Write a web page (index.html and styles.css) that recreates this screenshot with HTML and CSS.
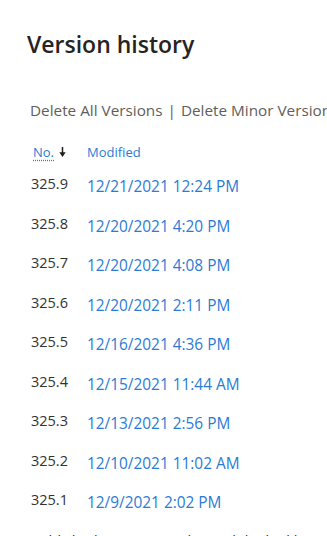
FILE: index.html
```html
<!DOCTYPE html>
<html lang="en">
<head>
  <meta charset="UTF-8" />
  <meta name="viewport" content="width=device-width, initial-scale=1.0"/>
  <title>Version history</title>
  <link rel="stylesheet" href="styles.css">
</head>
<body>
  <main class="panel">
    <h1>Version history</h1>

    <div class="actions">
      <a href="#">Delete All Versions</a>
      <span class="sep">|</span>
      <a href="#">Delete Minor Versions</a>
    </div>

    <div class="versions">
      <div class="head">
        <span class="col-no">
          <a href="#" class="sort">No.</a>
          <svg class="arrow" width="7" height="10" viewBox="0 0 7 10">
            <path d="M3.5 0 V6" stroke="#201f1e" stroke-width="1.5"/>
            <path d="M0.3 5.2 L6.7 5.2 L3.5 10 Z" fill="#201f1e"/>
          </svg>
        </span>
        <span class="col-date"><a href="#">Modified</a></span>
      </div>
      <div class="row"><span class="no">325.9</span><a href="#" class="date">12/21/2021 12:24 PM</a></div>
      <div class="row"><span class="no">325.8</span><a href="#" class="date">12/20/2021 4:20 PM</a></div>
      <div class="row"><span class="no">325.7</span><a href="#" class="date">12/20/2021 4:08 PM</a></div>
      <div class="row"><span class="no">325.6</span><a href="#" class="date">12/20/2021 2:11 PM</a></div>
      <div class="row"><span class="no">325.5</span><a href="#" class="date">12/16/2021 4:36 PM</a></div>
      <div class="row"><span class="no">325.4</span><a href="#" class="date">12/15/2021 11:44 AM</a></div>
      <div class="row"><span class="no">325.3</span><a href="#" class="date">12/13/2021 2:56 PM</a></div>
      <div class="row"><span class="no">325.2</span><a href="#" class="date">12/10/2021 11:02 AM</a></div>
      <div class="row"><span class="no">325.1</span><a href="#" class="date">12/9/2021 2:02 PM</a></div>
      <div class="row"><span class="note">Published versions are kept while the library holds them</span></div>
    </div>
  </main>
</body>
</html>
```

FILE: styles.css
```css
* {
  box-sizing: border-box;
  font-family: "Open Sans", "Noto Sans", sans-serif;
}
html, body {
  margin: 0;
  height: 100%;
  overflow: hidden;
  background: #fff;
}
a {
  color: #2b7bd6;
  text-decoration: none;
}
.panel {
  padding: 26px 0 0 27px;
  white-space: nowrap;
}
h1 {
  margin: 0;
  font-size: 23px;
  font-weight: 600;
  color: #252423;
  line-height: 36px;
}
.actions {
  margin-top: 38px;
  font-size: 15.3px;
  color: #605e5c;
  padding-left: 3px;
}
.actions a {
  color: #605e5c;
}
.sep {
  margin: 0 1px;
}
.versions {
  margin-top: 22px;
  padding-left: 4px;
}
.head,
.row {
  display: grid;
  grid-template-columns: 56px 1fr;
}
.head {
  font-size: 13px;
  height: 20px;
  align-items: center;
}
.col-no {
  display: flex;
  align-items: center;
  gap: 5px;
  padding-left: 2px;
}
.sort {
  text-decoration: underline dotted;
  text-underline-offset: 3px;
}
.arrow {
  margin-top: -1px;
}
.row {
  height: 39.5px;
  align-items: start;
  padding-top: 13px;
}
.no {
  font-size: 14.5px;
  color: #323130;
  line-height: 18px;
}
.date {
  font-size: 15.4px;
  line-height: 18px;
  margin-top: 3px;
}
.note {
  grid-column: 1 / 3;
  font-size: 14.5px;
  color: #323130;
  line-height: 18px;
  margin-top: 1px;
}
```
